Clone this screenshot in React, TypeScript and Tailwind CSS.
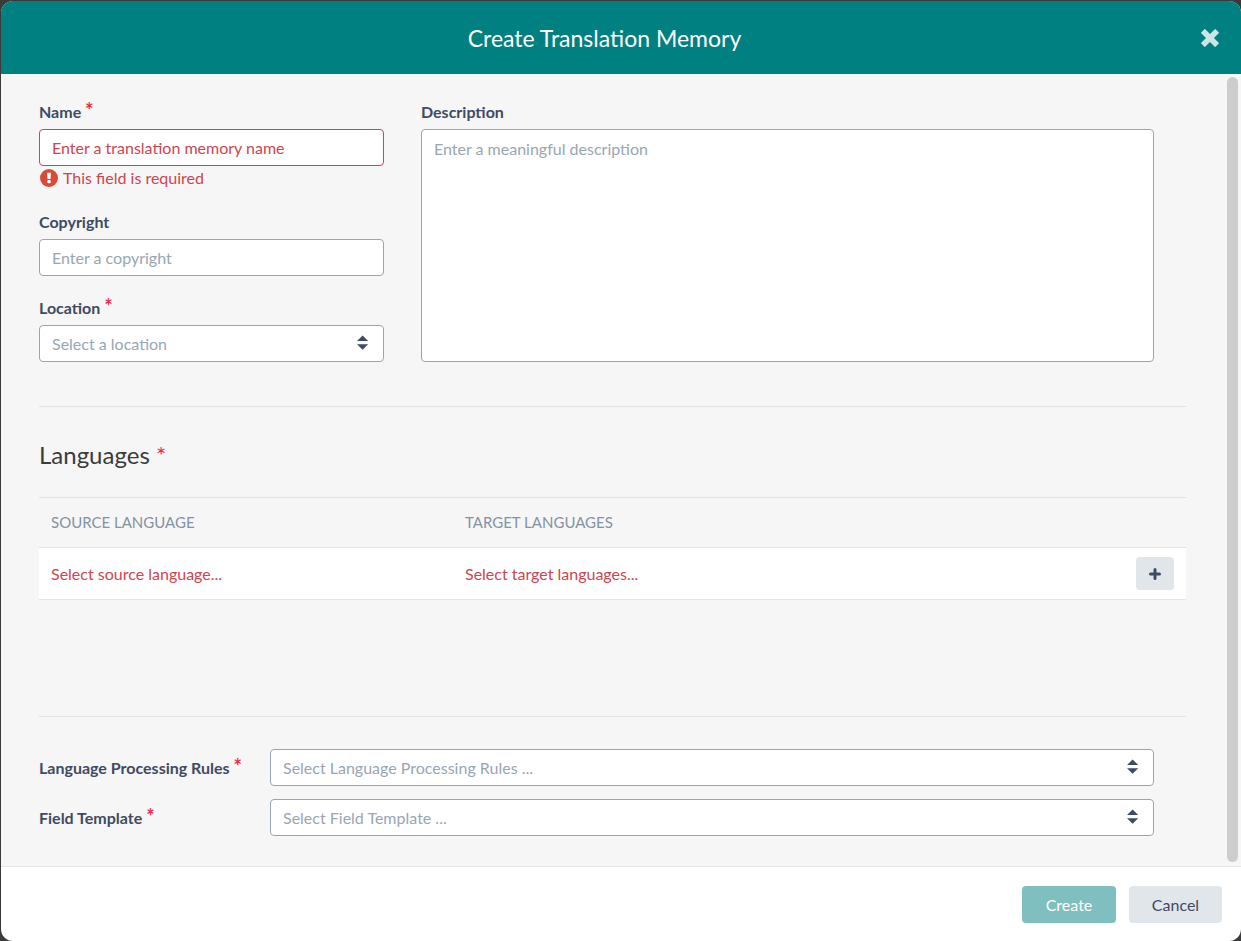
import type { ReactNode } from "react";

const fieldClass =
  "block h-[37px] w-full rounded border bg-white px-3 text-base outline-none";

function Required() {
  return <span className="text-xl leading-none text-[#ed2c4f]">*</span>;
}

function Label({
  htmlFor,
  required,
  children,
}: {
  htmlFor: string;
  required?: boolean;
  children: ReactNode;
}) {
  return (
    <label
      htmlFor={htmlFor}
      className="block h-6 text-base leading-[23px] font-bold whitespace-nowrap text-[#3f4a63]"
    >
      {children} {required && <Required />}
    </label>
  );
}

function SelectField({
  id,
  placeholder,
}: {
  id: string;
  placeholder: string;
}) {
  return (
    <div className="relative w-full">
      <select
        id={id}
        defaultValue=""
        className={`${fieldClass} appearance-none border-[#98a6b4] text-[#98a6b4]`}
      >
        <option value="">{placeholder}</option>
      </select>
      <svg
        viewBox="0 0 12 16"
        className="pointer-events-none absolute top-[10px] right-[15px] h-4 w-3"
        fill="#3f4a63"
        aria-hidden="true"
      >
        <path d="M5.6 .4 11.2 6H0ZM5.6 14.8 0 9.2h11.2Z" />
      </svg>
    </div>
  );
}

export default function App() {
  return (
    <div className="flex min-h-screen flex-col bg-[#3a3a3a] pt-px pl-px font-['Lato',sans-serif]">
      <div
        role="dialog"
        aria-labelledby="dialog-title"
        className="flex flex-1 flex-col overflow-hidden rounded-xl bg-white"
      >
        <header className="flex h-[73px] items-center bg-[#008080] pr-[22px] pl-[7px]">
          <h1
            id="dialog-title"
            className="flex-1 text-center text-[23px] leading-8 text-white"
          >
            Create Translation Memory
          </h1>
          <button type="button" aria-label="Close" className="h-[18px] w-[18px]">
            <svg viewBox="0 0 18 18" className="h-[18px] w-[18px]">
              <path
                d="M3.8 3.8 14.2 14.2M14.2 3.8 3.8 14.2"
                stroke="#cce6e6"
                strokeWidth="5.6"
                strokeLinecap="square"
              />
            </svg>
          </button>
        </header>

        <div className="flex flex-1 bg-[#f6f6f6]">
          <main className="flex-1 pt-[26px] pr-[41px] pb-[30px] pl-[38px]">
            <section className="flex gap-[37px] pr-8">
              <div className="flex w-[345px] shrink-0 flex-col gap-5">
                <div>
                  <Label htmlFor="name" required>
                    Name
                  </Label>
                  <input
                    id="name"
                    placeholder="Enter a translation memory name"
                    aria-describedby="name-error"
                    className={`${fieldClass} mt-[5px] border-[#ce4550] placeholder:text-[#ce4550]`}
                  />
                  <p
                    id="name-error"
                    className="flex items-center gap-[5px] pl-px text-base leading-6 text-[#ce4550]"
                  >
                    <svg viewBox="0 0 18 18" className="h-[18px] w-[18px]">
                      <circle cx="9" cy="9" r="9" fill="#d94b36" />
                      <path d="M7 3.8h4l-.5 6.2h-3Z" fill="#fff" />
                      <rect x="7.3" y="11" width="3.4" height="3.2" rx="1" fill="#fff" />
                    </svg>
                    This field is required
                  </p>
                </div>
                <div>
                  <Label htmlFor="copyright">Copyright</Label>
                  <input
                    id="copyright"
                    placeholder="Enter a copyright"
                    className={`${fieldClass} mt-[5px] border-[#98a6b4] placeholder:text-[#98a6b4]`}
                  />
                </div>
                <div className="flex flex-col gap-[5px]">
                  <Label htmlFor="location" required>
                    Location
                  </Label>
                  <SelectField id="location" placeholder="Select a location" />
                </div>
              </div>
              <div className="flex flex-1 flex-col gap-[5px]">
                <Label htmlFor="description">Description</Label>
                <textarea
                  id="description"
                  placeholder="Enter a meaningful description"
                  className="block w-full flex-1 resize-none rounded border border-[#98a6b4] bg-white px-3 py-[7px] text-base leading-6 outline-none placeholder:text-[#98a6b4]"
                />
              </div>
            </section>

            <hr className="mt-11 border-[#e0e5ea]" />

            <h2 className="mt-8 text-2xl leading-8 text-[#3b3b3b]">
              Languages <span className="text-[#ed2c4f]">*</span>
            </h2>
            <table className="mt-[26px] w-full table-fixed border-separate border-spacing-0 text-left text-base">
              <thead>
                <tr className="h-[51px] text-[15px] text-[#8492a3]">
                  <th className="w-[414px] border-y border-[#e2e4e6] px-3 font-normal">
                    SOURCE LANGUAGE
                  </th>
                  <th className="border-y border-[#e2e4e6] px-3 font-normal">
                    TARGET LANGUAGES
                  </th>
                  <th className="w-16 border-y border-[#e2e4e6]" />
                </tr>
              </thead>
              <tbody>
                <tr className="h-[52px] bg-white text-[#ce4550]">
                  <td className="border-b border-[#e2e4e6] px-3">
                    <button type="button">Select source language...</button>
                  </td>
                  <td className="border-b border-[#e2e4e6] px-3">
                    <button type="button">Select target languages...</button>
                  </td>
                  <td className="border-b border-[#e2e4e6] pr-3">
                    <button
                      type="button"
                      aria-label="Add language"
                      className="ml-auto flex h-[33px] w-[38px] items-center justify-center rounded bg-[#e0e6ea]"
                    >
                      <svg viewBox="0 0 12 12" className="h-3 w-3">
                        <path
                          d="M6 1.5v9M1.5 6h9"
                          stroke="#3f4a63"
                          strokeWidth="3"
                          strokeLinecap="round"
                        />
                      </svg>
                    </button>
                  </td>
                </tr>
              </tbody>
            </table>

            <hr className="mt-[116px] border-[#e0e5ea]" />

            <section className="mt-8 grid grid-cols-[231px_1fr] items-center gap-y-[13px] pr-8">
              <Label htmlFor="rules" required>
                Language Processing Rules
              </Label>
              <SelectField
                id="rules"
                placeholder="Select Language Processing Rules ..."
              />
              <Label htmlFor="template" required>
                Field Template
              </Label>
              <SelectField
                id="template"
                placeholder="Select Field Template ..."
              />
            </section>
          </main>
          <div className="flex w-[14px] pt-[3px] pr-[3px] pb-1" aria-hidden="true">
            <div className="flex-1 rounded-full bg-[#cccdcf]" />
          </div>
        </div>

        <footer className="flex justify-end gap-[13px] border-t border-[#e0e5ea] pt-[19px] pr-[19px] pb-[18px] text-base">
          <button
            type="button"
            className="h-[37px] w-[94px] rounded bg-[#80bfbf] text-white"
          >
            Create
          </button>
          <button
            type="button"
            className="h-[37px] w-[93px] rounded bg-[#e0e6ea] text-[#3f4a63]"
          >
            Cancel
          </button>
        </footer>
      </div>
    </div>
  );
}
